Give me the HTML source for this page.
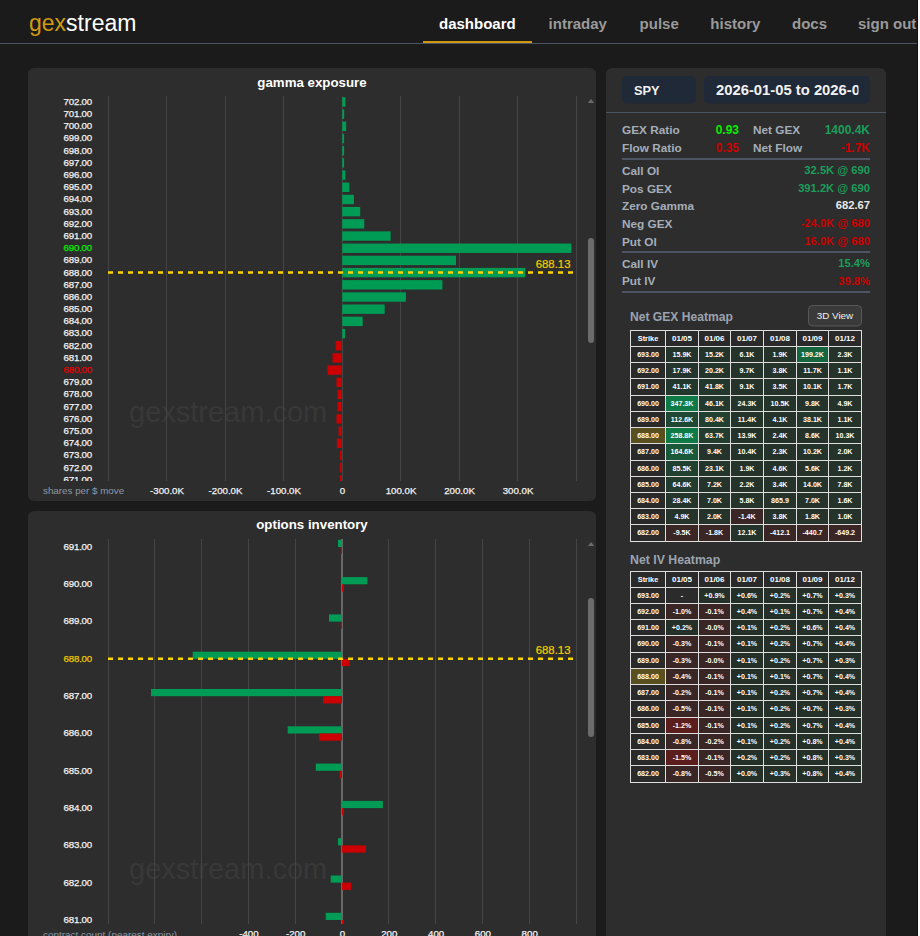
<!DOCTYPE html><html><head><meta charset="utf-8"><title>gexstream dashboard</title><style>
html,body{margin:0;padding:0;background:#1b1b1b;overflow:hidden;width:920px;height:936px}
svg text{font-family:"Liberation Sans", sans-serif}
</style></head><body>
<svg width="920" height="936" viewBox="0 0 920 936" style="display:block">
<rect x="0" y="0" width="920" height="936" fill="#1b1b1b"/>
<rect x="0" y="43" width="920" height="1" fill="#4b5563"/>
<text x="29" y="30.8" font-size="23" fill="#d09a12">gex<tspan fill="#ffffff">stream</tspan></text>
<text x="439" y="29" font-size="15" fill="#ffffff" font-weight="bold" text-anchor="start" >dashboard</text>
<text x="548.6" y="29" font-size="15" fill="#9a9a9a" font-weight="bold" text-anchor="start" >intraday</text>
<text x="639.6" y="29" font-size="15" fill="#9a9a9a" font-weight="bold" text-anchor="start" >pulse</text>
<text x="710.3" y="29" font-size="15" fill="#9a9a9a" font-weight="bold" text-anchor="start" >history</text>
<text x="792" y="29" font-size="15" fill="#9a9a9a" font-weight="bold" text-anchor="start" >docs</text>
<text x="858" y="29" font-size="15" fill="#9a9a9a" font-weight="bold" text-anchor="start" >sign out</text>
<rect x="423" y="41" width="109" height="2" fill="#cf960e"/>
<rect x="28" y="68" width="568" height="433" rx="6" fill="#2d2d2d"/>
<rect x="28" y="511" width="568" height="500" rx="6" fill="#2d2d2d"/>
<rect x="606" y="68" width="280" height="900" rx="6" fill="#2d2d2d"/>
<text x="312" y="86.7" font-size="13.3" fill="#ffffff" font-weight="bold" text-anchor="middle" >gamma exposure</text>
<text x="129" y="421.6" font-size="29" fill="#383838">gexstream.com</text>
<rect x="108" y="96" width="1" height="385" fill="#454545"/>
<rect x="166" y="96" width="1" height="385" fill="#454545"/>
<rect x="225" y="96" width="1" height="385" fill="#454545"/>
<rect x="283" y="96" width="1" height="385" fill="#454545"/>
<rect x="342" y="96" width="1" height="385" fill="#454545"/>
<rect x="400" y="96" width="1" height="385" fill="#454545"/>
<rect x="459" y="96" width="1" height="385" fill="#454545"/>
<rect x="517" y="96" width="1" height="385" fill="#454545"/>
<rect x="576" y="96" width="1" height="385" fill="#454545"/>
<defs><clipPath id="gc"><rect x="28" y="96" width="568" height="385"/></clipPath><clipPath id="oc"><rect x="28" y="539" width="568" height="385"/></clipPath></defs>
<g clip-path="url(#gc)">
<rect x="342.2" y="97.25" width="3.2" height="9.4" fill="#009b55"/>
<text x="92" y="104.85" font-size="9.7" fill="#f2f2f2" font-weight="normal" text-anchor="end" stroke="#f2f2f2" stroke-width="0.25" letter-spacing="-0.2">702.00</text>
<rect x="342.2" y="109.44" width="2" height="9.4" fill="#009b55"/>
<text x="92" y="117.04" font-size="9.7" fill="#f2f2f2" font-weight="normal" text-anchor="end" stroke="#f2f2f2" stroke-width="0.25" letter-spacing="-0.2">701.00</text>
<rect x="342.2" y="121.63" width="4" height="9.4" fill="#009b55"/>
<text x="92" y="129.23" font-size="9.7" fill="#f2f2f2" font-weight="normal" text-anchor="end" stroke="#f2f2f2" stroke-width="0.25" letter-spacing="-0.2">700.00</text>
<rect x="342.2" y="133.82" width="1.9" height="9.4" fill="#009b55"/>
<text x="92" y="141.42" font-size="9.7" fill="#f2f2f2" font-weight="normal" text-anchor="end" stroke="#f2f2f2" stroke-width="0.25" letter-spacing="-0.2">699.00</text>
<rect x="342.2" y="146.01" width="1.9" height="9.4" fill="#009b55"/>
<text x="92" y="153.61" font-size="9.7" fill="#f2f2f2" font-weight="normal" text-anchor="end" stroke="#f2f2f2" stroke-width="0.25" letter-spacing="-0.2">698.00</text>
<rect x="342.2" y="158.20" width="1.9" height="9.4" fill="#009b55"/>
<text x="92" y="165.80" font-size="9.7" fill="#f2f2f2" font-weight="normal" text-anchor="end" stroke="#f2f2f2" stroke-width="0.25" letter-spacing="-0.2">697.00</text>
<rect x="342.2" y="170.39" width="3.2" height="9.4" fill="#009b55"/>
<text x="92" y="177.99" font-size="9.7" fill="#f2f2f2" font-weight="normal" text-anchor="end" stroke="#f2f2f2" stroke-width="0.25" letter-spacing="-0.2">696.00</text>
<rect x="342.2" y="182.58" width="7.1" height="9.4" fill="#009b55"/>
<text x="92" y="190.18" font-size="9.7" fill="#f2f2f2" font-weight="normal" text-anchor="end" stroke="#f2f2f2" stroke-width="0.25" letter-spacing="-0.2">695.00</text>
<rect x="342.2" y="194.77" width="11.7" height="9.4" fill="#009b55"/>
<text x="92" y="202.37" font-size="9.7" fill="#f2f2f2" font-weight="normal" text-anchor="end" stroke="#f2f2f2" stroke-width="0.25" letter-spacing="-0.2">694.00</text>
<rect x="342.2" y="206.96" width="18" height="9.4" fill="#009b55"/>
<text x="92" y="214.56" font-size="9.7" fill="#f2f2f2" font-weight="normal" text-anchor="end" stroke="#f2f2f2" stroke-width="0.25" letter-spacing="-0.2">693.00</text>
<rect x="342.2" y="219.15" width="22.1" height="9.4" fill="#009b55"/>
<text x="92" y="226.75" font-size="9.7" fill="#f2f2f2" font-weight="normal" text-anchor="end" stroke="#f2f2f2" stroke-width="0.25" letter-spacing="-0.2">692.00</text>
<rect x="342.2" y="231.34" width="48.4" height="9.4" fill="#009b55"/>
<text x="92" y="238.94" font-size="9.7" fill="#f2f2f2" font-weight="normal" text-anchor="end" stroke="#f2f2f2" stroke-width="0.25" letter-spacing="-0.2">691.00</text>
<rect x="342.2" y="243.53" width="229.2" height="9.4" fill="#009b55"/>
<text x="92" y="251.13" font-size="9.7" fill="#00ee00" font-weight="normal" text-anchor="end" stroke="#00ee00" stroke-width="0.25" letter-spacing="-0.2">690.00</text>
<rect x="342.2" y="255.72" width="113.8" height="9.4" fill="#009b55"/>
<text x="92" y="263.32" font-size="9.7" fill="#f2f2f2" font-weight="normal" text-anchor="end" stroke="#f2f2f2" stroke-width="0.25" letter-spacing="-0.2">689.00</text>
<rect x="342.2" y="267.91" width="183.1" height="9.4" fill="#009b55"/>
<text x="92" y="275.51" font-size="9.7" fill="#f2f2f2" font-weight="normal" text-anchor="end" stroke="#f2f2f2" stroke-width="0.25" letter-spacing="-0.2">688.00</text>
<rect x="342.2" y="280.10" width="100.2" height="9.4" fill="#009b55"/>
<text x="92" y="287.70" font-size="9.7" fill="#f2f2f2" font-weight="normal" text-anchor="end" stroke="#f2f2f2" stroke-width="0.25" letter-spacing="-0.2">687.00</text>
<rect x="342.2" y="292.29" width="63.7" height="9.4" fill="#009b55"/>
<text x="92" y="299.89" font-size="9.7" fill="#f2f2f2" font-weight="normal" text-anchor="end" stroke="#f2f2f2" stroke-width="0.25" letter-spacing="-0.2">686.00</text>
<rect x="342.2" y="304.48" width="42.5" height="9.4" fill="#009b55"/>
<text x="92" y="312.08" font-size="9.7" fill="#f2f2f2" font-weight="normal" text-anchor="end" stroke="#f2f2f2" stroke-width="0.25" letter-spacing="-0.2">685.00</text>
<rect x="342.2" y="316.67" width="20.5" height="9.4" fill="#009b55"/>
<text x="92" y="324.27" font-size="9.7" fill="#f2f2f2" font-weight="normal" text-anchor="end" stroke="#f2f2f2" stroke-width="0.25" letter-spacing="-0.2">684.00</text>
<rect x="342.2" y="328.86" width="2.8" height="9.4" fill="#009b55"/>
<text x="92" y="336.46" font-size="9.7" fill="#f2f2f2" font-weight="normal" text-anchor="end" stroke="#f2f2f2" stroke-width="0.25" letter-spacing="-0.2">683.00</text>
<rect x="335.70" y="341.05" width="6.1" height="9.4" fill="#cc0000"/>
<text x="92" y="348.65" font-size="9.7" fill="#f2f2f2" font-weight="normal" text-anchor="end" stroke="#f2f2f2" stroke-width="0.25" letter-spacing="-0.2">682.00</text>
<rect x="332.50" y="353.24" width="9.3" height="9.4" fill="#cc0000"/>
<text x="92" y="360.84" font-size="9.7" fill="#f2f2f2" font-weight="normal" text-anchor="end" stroke="#f2f2f2" stroke-width="0.25" letter-spacing="-0.2">681.00</text>
<rect x="327.60" y="365.43" width="14.2" height="9.4" fill="#cc0000"/>
<text x="92" y="373.03" font-size="9.7" fill="#e60000" font-weight="normal" text-anchor="end" stroke="#e60000" stroke-width="0.25" letter-spacing="-0.2">680.00</text>
<rect x="336.50" y="377.62" width="5.3" height="9.4" fill="#cc0000"/>
<text x="92" y="385.22" font-size="9.7" fill="#f2f2f2" font-weight="normal" text-anchor="end" stroke="#f2f2f2" stroke-width="0.25" letter-spacing="-0.2">679.00</text>
<rect x="337.60" y="389.81" width="4.2" height="9.4" fill="#cc0000"/>
<text x="92" y="397.41" font-size="9.7" fill="#f2f2f2" font-weight="normal" text-anchor="end" stroke="#f2f2f2" stroke-width="0.25" letter-spacing="-0.2">678.00</text>
<rect x="337.60" y="402.00" width="4.2" height="9.4" fill="#cc0000"/>
<text x="92" y="409.60" font-size="9.7" fill="#f2f2f2" font-weight="normal" text-anchor="end" stroke="#f2f2f2" stroke-width="0.25" letter-spacing="-0.2">677.00</text>
<rect x="336.50" y="414.19" width="5.3" height="9.4" fill="#cc0000"/>
<text x="92" y="421.79" font-size="9.7" fill="#f2f2f2" font-weight="normal" text-anchor="end" stroke="#f2f2f2" stroke-width="0.25" letter-spacing="-0.2">676.00</text>
<rect x="338.60" y="426.38" width="3.2" height="9.4" fill="#cc0000"/>
<text x="92" y="433.98" font-size="9.7" fill="#f2f2f2" font-weight="normal" text-anchor="end" stroke="#f2f2f2" stroke-width="0.25" letter-spacing="-0.2">675.00</text>
<rect x="336.90" y="438.57" width="4.9" height="9.4" fill="#cc0000"/>
<text x="92" y="446.17" font-size="9.7" fill="#f2f2f2" font-weight="normal" text-anchor="end" stroke="#f2f2f2" stroke-width="0.25" letter-spacing="-0.2">674.00</text>
<rect x="339.80" y="450.76" width="2.0" height="9.4" fill="#cc0000"/>
<text x="92" y="458.36" font-size="9.7" fill="#f2f2f2" font-weight="normal" text-anchor="end" stroke="#f2f2f2" stroke-width="0.25" letter-spacing="-0.2">673.00</text>
<rect x="339.80" y="462.95" width="2.0" height="9.4" fill="#cc0000"/>
<text x="92" y="470.55" font-size="9.7" fill="#f2f2f2" font-weight="normal" text-anchor="end" stroke="#f2f2f2" stroke-width="0.25" letter-spacing="-0.2">672.00</text>
<rect x="339.80" y="475.14" width="2.0" height="9.4" fill="#cc0000"/>
<text x="92" y="482.74" font-size="9.7" fill="#f2f2f2" font-weight="normal" text-anchor="end" stroke="#f2f2f2" stroke-width="0.25" letter-spacing="-0.2">671.00</text>
</g>
<line x1="108" y1="272.5" x2="573" y2="272.5" stroke="#ffd400" stroke-width="2.4" stroke-dasharray="5 5"/>
<text x="570.5" y="267.7" font-size="11.4" fill="#f2cf00" font-weight="normal" text-anchor="end" stroke="#f2cf00" stroke-width="0.2">688.13</text>
<text x="43" y="494.3" font-size="9.8" fill="#8c98a8" font-weight="normal" text-anchor="start" >shares per $ move</text>
<text x="167.0" y="494.3" font-size="9.7" fill="#f2f2f2" font-weight="normal" text-anchor="middle" stroke="#f2f2f2" stroke-width="0.25">-300.0K</text>
<text x="225.5" y="494.3" font-size="9.7" fill="#f2f2f2" font-weight="normal" text-anchor="middle" stroke="#f2f2f2" stroke-width="0.25">-200.0K</text>
<text x="284.0" y="494.3" font-size="9.7" fill="#f2f2f2" font-weight="normal" text-anchor="middle" stroke="#f2f2f2" stroke-width="0.25">-100.0K</text>
<text x="342.5" y="494.3" font-size="9.7" fill="#f2f2f2" font-weight="normal" text-anchor="middle" stroke="#f2f2f2" stroke-width="0.25">0</text>
<text x="401.0" y="494.3" font-size="9.7" fill="#f2f2f2" font-weight="normal" text-anchor="middle" stroke="#f2f2f2" stroke-width="0.25">100.0K</text>
<text x="459.5" y="494.3" font-size="9.7" fill="#f2f2f2" font-weight="normal" text-anchor="middle" stroke="#f2f2f2" stroke-width="0.25">200.0K</text>
<text x="518.0" y="494.3" font-size="9.7" fill="#f2f2f2" font-weight="normal" text-anchor="middle" stroke="#f2f2f2" stroke-width="0.25">300.0K</text>
<path d="M587.8 103 L591 99 L594.2 103 Z" fill="#6a6a6a"/>
<rect x="588" y="238" width="6" height="105" rx="3" fill="#6b6b6b"/>
<text x="312" y="529.2" font-size="13.3" fill="#ffffff" font-weight="bold" text-anchor="middle" >options inventory</text>
<text x="129" y="878.5" font-size="29" fill="#383838">gexstream.com</text>
<rect x="108" y="539" width="1" height="385" fill="#454545"/>
<rect x="154" y="539" width="1" height="385" fill="#454545"/>
<rect x="201" y="539" width="1" height="385" fill="#454545"/>
<rect x="248" y="539" width="1" height="385" fill="#454545"/>
<rect x="295" y="539" width="1" height="385" fill="#454545"/>
<rect x="388" y="539" width="1" height="385" fill="#454545"/>
<rect x="435" y="539" width="1" height="385" fill="#454545"/>
<rect x="482" y="539" width="1" height="385" fill="#454545"/>
<rect x="529" y="539" width="1" height="385" fill="#454545"/>
<rect x="576" y="539" width="1" height="385" fill="#454545"/>
<rect x="341" y="539" width="2" height="385" fill="#686868"/>
<g clip-path="url(#oc)">
<rect x="338.00" y="539.80" width="4.00" height="7.2" fill="#009b55"/>
<rect x="340.80" y="547.00" width="1.20" height="7.2" fill="#cc0000"/>
<text x="92" y="549.80" font-size="9.7" fill="#f2f2f2" font-weight="normal" text-anchor="end" stroke="#f2f2f2" stroke-width="0.25" letter-spacing="-0.2">691.00</text>
<rect x="342.00" y="577.10" width="25.40" height="7.2" fill="#009b55"/>
<rect x="342.00" y="584.30" width="2.00" height="7.2" fill="#cc0000"/>
<text x="92" y="587.10" font-size="9.7" fill="#f2f2f2" font-weight="normal" text-anchor="end" stroke="#f2f2f2" stroke-width="0.25" letter-spacing="-0.2">690.00</text>
<rect x="329.00" y="614.40" width="13.00" height="7.2" fill="#009b55"/>
<rect x="340.80" y="621.60" width="1.20" height="7.2" fill="#cc0000"/>
<text x="92" y="624.40" font-size="9.7" fill="#f2f2f2" font-weight="normal" text-anchor="end" stroke="#f2f2f2" stroke-width="0.25" letter-spacing="-0.2">689.00</text>
<rect x="192.70" y="651.70" width="149.30" height="7.2" fill="#009b55"/>
<rect x="342.00" y="658.90" width="8.00" height="7.2" fill="#cc0000"/>
<text x="92" y="661.70" font-size="9.7" fill="#ecc800" font-weight="normal" text-anchor="end" stroke="#ecc800" stroke-width="0.25" letter-spacing="-0.2">688.00</text>
<rect x="151.00" y="689.00" width="191.00" height="7.2" fill="#009b55"/>
<rect x="323.00" y="696.20" width="19.00" height="7.2" fill="#cc0000"/>
<text x="92" y="699.00" font-size="9.7" fill="#f2f2f2" font-weight="normal" text-anchor="end" stroke="#f2f2f2" stroke-width="0.25" letter-spacing="-0.2">687.00</text>
<rect x="287.70" y="726.30" width="54.30" height="7.2" fill="#009b55"/>
<rect x="319.00" y="733.50" width="23.00" height="7.2" fill="#cc0000"/>
<text x="92" y="736.30" font-size="9.7" fill="#f2f2f2" font-weight="normal" text-anchor="end" stroke="#f2f2f2" stroke-width="0.25" letter-spacing="-0.2">686.00</text>
<rect x="315.80" y="763.60" width="26.20" height="7.2" fill="#009b55"/>
<rect x="339.60" y="770.80" width="2.40" height="7.2" fill="#cc0000"/>
<text x="92" y="773.60" font-size="9.7" fill="#f2f2f2" font-weight="normal" text-anchor="end" stroke="#f2f2f2" stroke-width="0.25" letter-spacing="-0.2">685.00</text>
<rect x="342.00" y="800.90" width="40.90" height="7.2" fill="#009b55"/>
<rect x="342.00" y="808.10" width="2.00" height="7.2" fill="#cc0000"/>
<text x="92" y="810.90" font-size="9.7" fill="#f2f2f2" font-weight="normal" text-anchor="end" stroke="#f2f2f2" stroke-width="0.25" letter-spacing="-0.2">684.00</text>
<rect x="338.00" y="838.20" width="4.00" height="7.2" fill="#009b55"/>
<rect x="342.00" y="845.40" width="24.00" height="7.2" fill="#cc0000"/>
<text x="92" y="848.20" font-size="9.7" fill="#f2f2f2" font-weight="normal" text-anchor="end" stroke="#f2f2f2" stroke-width="0.25" letter-spacing="-0.2">683.00</text>
<rect x="330.70" y="875.50" width="11.30" height="7.2" fill="#009b55"/>
<rect x="342.00" y="882.70" width="9.00" height="7.2" fill="#cc0000"/>
<text x="92" y="885.50" font-size="9.7" fill="#f2f2f2" font-weight="normal" text-anchor="end" stroke="#f2f2f2" stroke-width="0.25" letter-spacing="-0.2">682.00</text>
<rect x="325.70" y="912.80" width="16.30" height="7.2" fill="#009b55"/>
<rect x="342.00" y="920.00" width="2.00" height="7.2" fill="#cc0000"/>
<text x="92" y="922.80" font-size="9.7" fill="#f2f2f2" font-weight="normal" text-anchor="end" stroke="#f2f2f2" stroke-width="0.25" letter-spacing="-0.2">681.00</text>
</g>
<line x1="108" y1="658.7" x2="573" y2="658.7" stroke="#ffd400" stroke-width="2.4" stroke-dasharray="5 5"/>
<text x="570.5" y="654.1" font-size="11.4" fill="#f2cf00" font-weight="normal" text-anchor="end" stroke="#f2cf00" stroke-width="0.2">688.13</text>
<text x="43" y="938.0" font-size="9.93" fill="#8c98a8" font-weight="normal" text-anchor="start" >contract count (nearest expiry)</text>
<text x="248.9" y="937.0" font-size="9.7" fill="#f2f2f2" font-weight="normal" text-anchor="middle" stroke="#f2f2f2" stroke-width="0.25">-400</text>
<text x="295.7" y="937.0" font-size="9.7" fill="#f2f2f2" font-weight="normal" text-anchor="middle" stroke="#f2f2f2" stroke-width="0.25">-200</text>
<text x="342.5" y="937.0" font-size="9.7" fill="#f2f2f2" font-weight="normal" text-anchor="middle" stroke="#f2f2f2" stroke-width="0.25">0</text>
<text x="389.3" y="937.0" font-size="9.7" fill="#f2f2f2" font-weight="normal" text-anchor="middle" stroke="#f2f2f2" stroke-width="0.25">200</text>
<text x="436.1" y="937.0" font-size="9.7" fill="#f2f2f2" font-weight="normal" text-anchor="middle" stroke="#f2f2f2" stroke-width="0.25">400</text>
<text x="482.9" y="937.0" font-size="9.7" fill="#f2f2f2" font-weight="normal" text-anchor="middle" stroke="#f2f2f2" stroke-width="0.25">600</text>
<text x="529.7" y="937.0" font-size="9.7" fill="#f2f2f2" font-weight="normal" text-anchor="middle" stroke="#f2f2f2" stroke-width="0.25">800</text>
<path d="M587.8 546 L591 542 L594.2 546 Z" fill="#6a6a6a"/>
<rect x="588" y="598" width="6" height="139" rx="3" fill="#6b6b6b"/>
<rect x="622" y="76" width="74" height="27.5" rx="5" fill="#1f2937"/>
<rect x="704" y="76" width="166" height="27.5" rx="5" fill="#1f2937"/>
<text x="634" y="95" font-size="12.8" fill="#f2f2f2" font-weight="bold" text-anchor="start" >SPY</text>
<clipPath id="dc"><rect x="704" y="76" width="154.5" height="28"/></clipPath>
<g clip-path="url(#dc)"><text x="716" y="95" font-size="14.8" fill="#f2f2f2" font-weight="bold" text-anchor="start" >2026-01-05 to 2026-01-12</text></g>
<rect x="606" y="112" width="280" height="1" fill="#4b5563"/>
<text x="622" y="134" font-size="11.8" fill="#a5adb9" font-weight="bold" text-anchor="start" >GEX Ratio</text>
<text x="739" y="134" font-size="12" fill="#00ee00" font-weight="bold" text-anchor="end" >0.93</text>
<text x="753" y="134" font-size="11.8" fill="#a5adb9" font-weight="bold" text-anchor="start" >Net GEX</text>
<text x="870" y="134" font-size="12" fill="#1a9e5a" font-weight="bold" text-anchor="end" >1400.4K</text>
<text x="622" y="151.7" font-size="11.8" fill="#a5adb9" font-weight="bold" text-anchor="start" >Flow Ratio</text>
<text x="739" y="151.7" font-size="12" fill="#cc0000" font-weight="bold" text-anchor="end" >0.35</text>
<text x="753" y="151.7" font-size="11.8" fill="#a5adb9" font-weight="bold" text-anchor="start" >Net Flow</text>
<text x="870" y="151.7" font-size="12" fill="#cc0000" font-weight="bold" text-anchor="end" >-1.7K</text>
<rect x="622" y="158" width="248" height="2" fill="#4b5563"/>
<text x="622" y="174.8" font-size="11.8" fill="#a5adb9" font-weight="bold" text-anchor="start" >Call OI</text>
<text x="870" y="173.9" font-size="11.2" fill="#1a9e5a" font-weight="bold" text-anchor="end" >32.5K @ 690</text>
<text x="622" y="192.5" font-size="11.8" fill="#a5adb9" font-weight="bold" text-anchor="start" >Pos GEX</text>
<text x="870" y="191.6" font-size="11.2" fill="#1a9e5a" font-weight="bold" text-anchor="end" >391.2K @ 690</text>
<text x="622" y="210.2" font-size="11.8" fill="#a5adb9" font-weight="bold" text-anchor="start" >Zero Gamma</text>
<text x="870" y="209.29999999999998" font-size="11.2" fill="#e8e8e8" font-weight="bold" text-anchor="end" >682.67</text>
<text x="622" y="227.9" font-size="11.8" fill="#a5adb9" font-weight="bold" text-anchor="start" >Neg GEX</text>
<text x="870" y="227.0" font-size="11.2" fill="#cc0000" font-weight="bold" text-anchor="end" >-24.0K @ 680</text>
<text x="622" y="245.6" font-size="11.8" fill="#a5adb9" font-weight="bold" text-anchor="start" >Put OI</text>
<text x="870" y="244.7" font-size="11.2" fill="#cc0000" font-weight="bold" text-anchor="end" >16.0K @ 680</text>
<rect x="622" y="251" width="248" height="2" fill="#4b5563"/>
<text x="622" y="267.7" font-size="11.8" fill="#a5adb9" font-weight="bold" text-anchor="start" >Call IV</text>
<text x="870" y="266.9" font-size="11.2" fill="#1a9e5a" font-weight="bold" text-anchor="end" >15.4%</text>
<text x="622" y="285.3" font-size="11.8" fill="#a5adb9" font-weight="bold" text-anchor="start" >Put IV</text>
<text x="870" y="284.5" font-size="11.2" fill="#cc0000" font-weight="bold" text-anchor="end" >39.8%</text>
<rect x="622" y="291" width="248" height="2" fill="#4b5563"/>
<text x="630" y="320.6" font-size="12.1" fill="#9ca3af" font-weight="bold" text-anchor="start" >Net GEX Heatmap</text>
<rect x="808.5" y="305.5" width="53" height="20.5" rx="4" fill="#3a3a3a" stroke="#585858" stroke-width="1"/>
<text x="835" y="319.2" font-size="9.8" fill="#f2f2f2" font-weight="normal" text-anchor="middle" >3D View</text>
<text x="630" y="563.5" font-size="12.3" fill="#9ca3af" font-weight="bold" text-anchor="start" >Net IV Heatmap</text>
<rect x="630" y="330" width="232" height="212" fill="#2a2a2a"/>
<rect x="665" y="346" width="33" height="16" fill="#25342b"/>
<rect x="698" y="346" width="32" height="16" fill="#25342b"/>
<rect x="730" y="346" width="33" height="16" fill="#25332b"/>
<rect x="763" y="346" width="33" height="16" fill="#25332b"/>
<rect x="796" y="346" width="32" height="16" fill="#15653e"/>
<rect x="828" y="346" width="33" height="16" fill="#25332b"/>
<rect x="665" y="362" width="33" height="16" fill="#25342c"/>
<rect x="698" y="362" width="32" height="16" fill="#24352c"/>
<rect x="730" y="362" width="33" height="16" fill="#25342b"/>
<rect x="763" y="362" width="33" height="16" fill="#25332b"/>
<rect x="796" y="362" width="32" height="16" fill="#25342b"/>
<rect x="828" y="362" width="33" height="16" fill="#25332b"/>
<rect x="665" y="378" width="33" height="17" fill="#23382d"/>
<rect x="698" y="378" width="32" height="17" fill="#23382d"/>
<rect x="730" y="378" width="33" height="17" fill="#25332b"/>
<rect x="763" y="378" width="33" height="17" fill="#25332b"/>
<rect x="796" y="378" width="32" height="17" fill="#25342b"/>
<rect x="828" y="378" width="33" height="17" fill="#25332b"/>
<rect x="665" y="395" width="33" height="16" fill="#0e7a46"/>
<rect x="698" y="395" width="32" height="16" fill="#23392d"/>
<rect x="730" y="395" width="33" height="16" fill="#24352c"/>
<rect x="763" y="395" width="33" height="16" fill="#25342b"/>
<rect x="796" y="395" width="32" height="16" fill="#25342b"/>
<rect x="828" y="395" width="33" height="16" fill="#25332b"/>
<rect x="665" y="411" width="33" height="16" fill="#1e4833"/>
<rect x="698" y="411" width="32" height="16" fill="#214030"/>
<rect x="730" y="411" width="33" height="16" fill="#25342b"/>
<rect x="763" y="411" width="33" height="16" fill="#25332b"/>
<rect x="796" y="411" width="32" height="16" fill="#24372d"/>
<rect x="828" y="411" width="33" height="16" fill="#25332b"/>
<rect x="630" y="427" width="35" height="16" fill="#5a4f1e"/>
<rect x="665" y="427" width="33" height="16" fill="#0e7a46"/>
<rect x="698" y="427" width="32" height="16" fill="#223c2e"/>
<rect x="730" y="427" width="33" height="16" fill="#25342b"/>
<rect x="763" y="427" width="33" height="16" fill="#25332b"/>
<rect x="796" y="427" width="32" height="16" fill="#25332b"/>
<rect x="828" y="427" width="33" height="16" fill="#25342b"/>
<rect x="665" y="443" width="33" height="17" fill="#195939"/>
<rect x="698" y="443" width="32" height="17" fill="#25342b"/>
<rect x="730" y="443" width="33" height="17" fill="#25342b"/>
<rect x="763" y="443" width="33" height="17" fill="#25332b"/>
<rect x="796" y="443" width="32" height="17" fill="#25342b"/>
<rect x="828" y="443" width="33" height="17" fill="#25332b"/>
<rect x="665" y="460" width="33" height="16" fill="#204130"/>
<rect x="698" y="460" width="32" height="16" fill="#24352c"/>
<rect x="730" y="460" width="33" height="16" fill="#25332b"/>
<rect x="763" y="460" width="33" height="16" fill="#25332b"/>
<rect x="796" y="460" width="32" height="16" fill="#25332b"/>
<rect x="828" y="460" width="33" height="16" fill="#25332b"/>
<rect x="665" y="476" width="33" height="16" fill="#223c2f"/>
<rect x="698" y="476" width="32" height="16" fill="#25332b"/>
<rect x="730" y="476" width="33" height="16" fill="#25332b"/>
<rect x="763" y="476" width="33" height="16" fill="#25332b"/>
<rect x="796" y="476" width="32" height="16" fill="#25342b"/>
<rect x="828" y="476" width="33" height="16" fill="#25332b"/>
<rect x="665" y="492" width="33" height="16" fill="#24362c"/>
<rect x="698" y="492" width="32" height="16" fill="#25332b"/>
<rect x="730" y="492" width="33" height="16" fill="#25332b"/>
<rect x="763" y="492" width="33" height="16" fill="#25332b"/>
<rect x="796" y="492" width="32" height="16" fill="#25332b"/>
<rect x="828" y="492" width="33" height="16" fill="#25332b"/>
<rect x="665" y="508" width="33" height="16" fill="#25332b"/>
<rect x="698" y="508" width="32" height="16" fill="#25332b"/>
<rect x="730" y="508" width="33" height="16" fill="#3b2626"/>
<rect x="763" y="508" width="33" height="16" fill="#25332b"/>
<rect x="796" y="508" width="32" height="16" fill="#25332b"/>
<rect x="828" y="508" width="33" height="16" fill="#25332b"/>
<rect x="665" y="524" width="33" height="17" fill="#3b2626"/>
<rect x="698" y="524" width="32" height="17" fill="#3b2626"/>
<rect x="730" y="524" width="33" height="17" fill="#25342b"/>
<rect x="763" y="524" width="33" height="17" fill="#3b2626"/>
<rect x="796" y="524" width="32" height="17" fill="#3b2626"/>
<rect x="828" y="524" width="33" height="17" fill="#3b2626"/>
<rect x="630" y="330" width="1" height="212" fill="#dedede"/>
<rect x="665" y="330" width="1" height="212" fill="#dedede"/>
<rect x="698" y="330" width="1" height="212" fill="#dedede"/>
<rect x="730" y="330" width="1" height="212" fill="#dedede"/>
<rect x="763" y="330" width="1" height="212" fill="#dedede"/>
<rect x="796" y="330" width="1" height="212" fill="#dedede"/>
<rect x="828" y="330" width="1" height="212" fill="#dedede"/>
<rect x="861" y="330" width="1" height="212" fill="#dedede"/>
<rect x="630" y="330" width="232" height="1" fill="#dedede"/>
<rect x="630" y="346" width="232" height="1" fill="#dedede"/>
<rect x="630" y="362" width="232" height="1" fill="#dedede"/>
<rect x="630" y="378" width="232" height="1" fill="#dedede"/>
<rect x="630" y="395" width="232" height="1" fill="#dedede"/>
<rect x="630" y="411" width="232" height="1" fill="#dedede"/>
<rect x="630" y="427" width="232" height="1" fill="#dedede"/>
<rect x="630" y="443" width="232" height="1" fill="#dedede"/>
<rect x="630" y="460" width="232" height="1" fill="#dedede"/>
<rect x="630" y="476" width="232" height="1" fill="#dedede"/>
<rect x="630" y="492" width="232" height="1" fill="#dedede"/>
<rect x="630" y="508" width="232" height="1" fill="#dedede"/>
<rect x="630" y="524" width="232" height="1" fill="#dedede"/>
<rect x="630" y="541" width="232" height="1" fill="#dedede"/>
<text x="648.00" y="340.8" font-size="7.4" fill="#ffffff" font-weight="bold" text-anchor="middle" >Strike</text>
<text x="682.00" y="340.8" font-size="8" fill="#ffffff" font-weight="bold" text-anchor="middle" >01/05</text>
<text x="714.50" y="340.8" font-size="8" fill="#ffffff" font-weight="bold" text-anchor="middle" >01/06</text>
<text x="747.00" y="340.8" font-size="8" fill="#ffffff" font-weight="bold" text-anchor="middle" >01/07</text>
<text x="780.00" y="340.8" font-size="8" fill="#ffffff" font-weight="bold" text-anchor="middle" >01/08</text>
<text x="812.50" y="340.8" font-size="8" fill="#ffffff" font-weight="bold" text-anchor="middle" >01/09</text>
<text x="845.00" y="340.8" font-size="8" fill="#ffffff" font-weight="bold" text-anchor="middle" >01/12</text>
<text x="648.00" y="357.00" font-size="7.1" fill="#ffffff" font-weight="bold" text-anchor="middle" >693.00</text>
<text x="682.00" y="357.00" font-size="7.1" fill="#ffffff" font-weight="bold" text-anchor="middle" >15.9K</text>
<text x="714.50" y="357.00" font-size="7.1" fill="#ffffff" font-weight="bold" text-anchor="middle" >15.2K</text>
<text x="747.00" y="357.00" font-size="7.1" fill="#ffffff" font-weight="bold" text-anchor="middle" >6.1K</text>
<text x="780.00" y="357.00" font-size="7.1" fill="#ffffff" font-weight="bold" text-anchor="middle" >1.9K</text>
<text x="812.50" y="357.00" font-size="7.1" fill="#ffffff" font-weight="bold" text-anchor="middle" >199.2K</text>
<text x="845.00" y="357.00" font-size="7.1" fill="#ffffff" font-weight="bold" text-anchor="middle" >2.3K</text>
<text x="648.00" y="373.00" font-size="7.1" fill="#ffffff" font-weight="bold" text-anchor="middle" >692.00</text>
<text x="682.00" y="373.00" font-size="7.1" fill="#ffffff" font-weight="bold" text-anchor="middle" >17.9K</text>
<text x="714.50" y="373.00" font-size="7.1" fill="#ffffff" font-weight="bold" text-anchor="middle" >20.2K</text>
<text x="747.00" y="373.00" font-size="7.1" fill="#ffffff" font-weight="bold" text-anchor="middle" >9.7K</text>
<text x="780.00" y="373.00" font-size="7.1" fill="#ffffff" font-weight="bold" text-anchor="middle" >3.8K</text>
<text x="812.50" y="373.00" font-size="7.1" fill="#ffffff" font-weight="bold" text-anchor="middle" >11.7K</text>
<text x="845.00" y="373.00" font-size="7.1" fill="#ffffff" font-weight="bold" text-anchor="middle" >1.1K</text>
<text x="648.00" y="389.00" font-size="7.1" fill="#ffffff" font-weight="bold" text-anchor="middle" >691.00</text>
<text x="682.00" y="389.00" font-size="7.1" fill="#ffffff" font-weight="bold" text-anchor="middle" >41.1K</text>
<text x="714.50" y="389.00" font-size="7.1" fill="#ffffff" font-weight="bold" text-anchor="middle" >41.8K</text>
<text x="747.00" y="389.00" font-size="7.1" fill="#ffffff" font-weight="bold" text-anchor="middle" >9.1K</text>
<text x="780.00" y="389.00" font-size="7.1" fill="#ffffff" font-weight="bold" text-anchor="middle" >3.5K</text>
<text x="812.50" y="389.00" font-size="7.1" fill="#ffffff" font-weight="bold" text-anchor="middle" >10.1K</text>
<text x="845.00" y="389.00" font-size="7.1" fill="#ffffff" font-weight="bold" text-anchor="middle" >1.7K</text>
<text x="648.00" y="406.00" font-size="7.1" fill="#ffffff" font-weight="bold" text-anchor="middle" >690.00</text>
<text x="682.00" y="406.00" font-size="7.1" fill="#ffffff" font-weight="bold" text-anchor="middle" >347.3K</text>
<text x="714.50" y="406.00" font-size="7.1" fill="#ffffff" font-weight="bold" text-anchor="middle" >46.1K</text>
<text x="747.00" y="406.00" font-size="7.1" fill="#ffffff" font-weight="bold" text-anchor="middle" >24.3K</text>
<text x="780.00" y="406.00" font-size="7.1" fill="#ffffff" font-weight="bold" text-anchor="middle" >10.5K</text>
<text x="812.50" y="406.00" font-size="7.1" fill="#ffffff" font-weight="bold" text-anchor="middle" >9.8K</text>
<text x="845.00" y="406.00" font-size="7.1" fill="#ffffff" font-weight="bold" text-anchor="middle" >4.9K</text>
<text x="648.00" y="422.00" font-size="7.1" fill="#ffffff" font-weight="bold" text-anchor="middle" >689.00</text>
<text x="682.00" y="422.00" font-size="7.1" fill="#ffffff" font-weight="bold" text-anchor="middle" >112.6K</text>
<text x="714.50" y="422.00" font-size="7.1" fill="#ffffff" font-weight="bold" text-anchor="middle" >80.4K</text>
<text x="747.00" y="422.00" font-size="7.1" fill="#ffffff" font-weight="bold" text-anchor="middle" >11.4K</text>
<text x="780.00" y="422.00" font-size="7.1" fill="#ffffff" font-weight="bold" text-anchor="middle" >4.1K</text>
<text x="812.50" y="422.00" font-size="7.1" fill="#ffffff" font-weight="bold" text-anchor="middle" >38.1K</text>
<text x="845.00" y="422.00" font-size="7.1" fill="#ffffff" font-weight="bold" text-anchor="middle" >1.1K</text>
<text x="648.00" y="438.00" font-size="7.1" fill="#ffffff" font-weight="bold" text-anchor="middle" >688.00</text>
<text x="682.00" y="438.00" font-size="7.1" fill="#ffffff" font-weight="bold" text-anchor="middle" >258.8K</text>
<text x="714.50" y="438.00" font-size="7.1" fill="#ffffff" font-weight="bold" text-anchor="middle" >63.7K</text>
<text x="747.00" y="438.00" font-size="7.1" fill="#ffffff" font-weight="bold" text-anchor="middle" >13.9K</text>
<text x="780.00" y="438.00" font-size="7.1" fill="#ffffff" font-weight="bold" text-anchor="middle" >2.4K</text>
<text x="812.50" y="438.00" font-size="7.1" fill="#ffffff" font-weight="bold" text-anchor="middle" >8.6K</text>
<text x="845.00" y="438.00" font-size="7.1" fill="#ffffff" font-weight="bold" text-anchor="middle" >10.3K</text>
<text x="648.00" y="454.00" font-size="7.1" fill="#ffffff" font-weight="bold" text-anchor="middle" >687.00</text>
<text x="682.00" y="454.00" font-size="7.1" fill="#ffffff" font-weight="bold" text-anchor="middle" >164.6K</text>
<text x="714.50" y="454.00" font-size="7.1" fill="#ffffff" font-weight="bold" text-anchor="middle" >9.4K</text>
<text x="747.00" y="454.00" font-size="7.1" fill="#ffffff" font-weight="bold" text-anchor="middle" >10.4K</text>
<text x="780.00" y="454.00" font-size="7.1" fill="#ffffff" font-weight="bold" text-anchor="middle" >2.3K</text>
<text x="812.50" y="454.00" font-size="7.1" fill="#ffffff" font-weight="bold" text-anchor="middle" >10.2K</text>
<text x="845.00" y="454.00" font-size="7.1" fill="#ffffff" font-weight="bold" text-anchor="middle" >2.0K</text>
<text x="648.00" y="471.00" font-size="7.1" fill="#ffffff" font-weight="bold" text-anchor="middle" >686.00</text>
<text x="682.00" y="471.00" font-size="7.1" fill="#ffffff" font-weight="bold" text-anchor="middle" >85.5K</text>
<text x="714.50" y="471.00" font-size="7.1" fill="#ffffff" font-weight="bold" text-anchor="middle" >23.1K</text>
<text x="747.00" y="471.00" font-size="7.1" fill="#ffffff" font-weight="bold" text-anchor="middle" >1.9K</text>
<text x="780.00" y="471.00" font-size="7.1" fill="#ffffff" font-weight="bold" text-anchor="middle" >4.6K</text>
<text x="812.50" y="471.00" font-size="7.1" fill="#ffffff" font-weight="bold" text-anchor="middle" >5.6K</text>
<text x="845.00" y="471.00" font-size="7.1" fill="#ffffff" font-weight="bold" text-anchor="middle" >1.2K</text>
<text x="648.00" y="487.00" font-size="7.1" fill="#ffffff" font-weight="bold" text-anchor="middle" >685.00</text>
<text x="682.00" y="487.00" font-size="7.1" fill="#ffffff" font-weight="bold" text-anchor="middle" >64.6K</text>
<text x="714.50" y="487.00" font-size="7.1" fill="#ffffff" font-weight="bold" text-anchor="middle" >7.2K</text>
<text x="747.00" y="487.00" font-size="7.1" fill="#ffffff" font-weight="bold" text-anchor="middle" >2.2K</text>
<text x="780.00" y="487.00" font-size="7.1" fill="#ffffff" font-weight="bold" text-anchor="middle" >3.4K</text>
<text x="812.50" y="487.00" font-size="7.1" fill="#ffffff" font-weight="bold" text-anchor="middle" >14.0K</text>
<text x="845.00" y="487.00" font-size="7.1" fill="#ffffff" font-weight="bold" text-anchor="middle" >7.8K</text>
<text x="648.00" y="503.00" font-size="7.1" fill="#ffffff" font-weight="bold" text-anchor="middle" >684.00</text>
<text x="682.00" y="503.00" font-size="7.1" fill="#ffffff" font-weight="bold" text-anchor="middle" >28.4K</text>
<text x="714.50" y="503.00" font-size="7.1" fill="#ffffff" font-weight="bold" text-anchor="middle" >7.0K</text>
<text x="747.00" y="503.00" font-size="7.1" fill="#ffffff" font-weight="bold" text-anchor="middle" >5.8K</text>
<text x="780.00" y="503.00" font-size="7.1" fill="#ffffff" font-weight="bold" text-anchor="middle" >865.9</text>
<text x="812.50" y="503.00" font-size="7.1" fill="#ffffff" font-weight="bold" text-anchor="middle" >7.0K</text>
<text x="845.00" y="503.00" font-size="7.1" fill="#ffffff" font-weight="bold" text-anchor="middle" >1.6K</text>
<text x="648.00" y="519.00" font-size="7.1" fill="#ffffff" font-weight="bold" text-anchor="middle" >683.00</text>
<text x="682.00" y="519.00" font-size="7.1" fill="#ffffff" font-weight="bold" text-anchor="middle" >4.9K</text>
<text x="714.50" y="519.00" font-size="7.1" fill="#ffffff" font-weight="bold" text-anchor="middle" >2.0K</text>
<text x="747.00" y="519.00" font-size="7.1" fill="#ffffff" font-weight="bold" text-anchor="middle" >-1.4K</text>
<text x="780.00" y="519.00" font-size="7.1" fill="#ffffff" font-weight="bold" text-anchor="middle" >3.8K</text>
<text x="812.50" y="519.00" font-size="7.1" fill="#ffffff" font-weight="bold" text-anchor="middle" >1.8K</text>
<text x="845.00" y="519.00" font-size="7.1" fill="#ffffff" font-weight="bold" text-anchor="middle" >1.0K</text>
<text x="648.00" y="535.00" font-size="7.1" fill="#ffffff" font-weight="bold" text-anchor="middle" >682.00</text>
<text x="682.00" y="535.00" font-size="7.1" fill="#ffffff" font-weight="bold" text-anchor="middle" >-9.5K</text>
<text x="714.50" y="535.00" font-size="7.1" fill="#ffffff" font-weight="bold" text-anchor="middle" >-1.8K</text>
<text x="747.00" y="535.00" font-size="7.1" fill="#ffffff" font-weight="bold" text-anchor="middle" >12.1K</text>
<text x="780.00" y="535.00" font-size="7.1" fill="#ffffff" font-weight="bold" text-anchor="middle" >-412.1</text>
<text x="812.50" y="535.00" font-size="7.1" fill="#ffffff" font-weight="bold" text-anchor="middle" >-440.7</text>
<text x="845.00" y="535.00" font-size="7.1" fill="#ffffff" font-weight="bold" text-anchor="middle" >-649.2</text>
<rect x="630" y="571" width="232" height="212" fill="#2a2a2a"/>
<rect x="665" y="587" width="33" height="16" fill="#2b2b2b"/>
<rect x="698" y="587" width="32" height="16" fill="#253029"/>
<rect x="730" y="587" width="33" height="16" fill="#253029"/>
<rect x="763" y="587" width="33" height="16" fill="#253029"/>
<rect x="796" y="587" width="32" height="16" fill="#253029"/>
<rect x="828" y="587" width="33" height="16" fill="#253029"/>
<rect x="665" y="603" width="33" height="16" fill="#3b2626"/>
<rect x="698" y="603" width="32" height="16" fill="#3b2626"/>
<rect x="730" y="603" width="33" height="16" fill="#253029"/>
<rect x="763" y="603" width="33" height="16" fill="#253029"/>
<rect x="796" y="603" width="32" height="16" fill="#253029"/>
<rect x="828" y="603" width="33" height="16" fill="#253029"/>
<rect x="665" y="619" width="33" height="16" fill="#253029"/>
<rect x="698" y="619" width="32" height="16" fill="#3b2626"/>
<rect x="730" y="619" width="33" height="16" fill="#253029"/>
<rect x="763" y="619" width="33" height="16" fill="#253029"/>
<rect x="796" y="619" width="32" height="16" fill="#253029"/>
<rect x="828" y="619" width="33" height="16" fill="#253029"/>
<rect x="665" y="635" width="33" height="17" fill="#3b2626"/>
<rect x="698" y="635" width="32" height="17" fill="#3b2626"/>
<rect x="730" y="635" width="33" height="17" fill="#253029"/>
<rect x="763" y="635" width="33" height="17" fill="#253029"/>
<rect x="796" y="635" width="32" height="17" fill="#253029"/>
<rect x="828" y="635" width="33" height="17" fill="#253029"/>
<rect x="665" y="652" width="33" height="16" fill="#3b2626"/>
<rect x="698" y="652" width="32" height="16" fill="#3b2626"/>
<rect x="730" y="652" width="33" height="16" fill="#253029"/>
<rect x="763" y="652" width="33" height="16" fill="#253029"/>
<rect x="796" y="652" width="32" height="16" fill="#253029"/>
<rect x="828" y="652" width="33" height="16" fill="#253029"/>
<rect x="630" y="668" width="35" height="16" fill="#5a4f1e"/>
<rect x="665" y="668" width="33" height="16" fill="#3b2626"/>
<rect x="698" y="668" width="32" height="16" fill="#3b2626"/>
<rect x="730" y="668" width="33" height="16" fill="#253029"/>
<rect x="763" y="668" width="33" height="16" fill="#253029"/>
<rect x="796" y="668" width="32" height="16" fill="#253029"/>
<rect x="828" y="668" width="33" height="16" fill="#253029"/>
<rect x="665" y="684" width="33" height="16" fill="#3b2626"/>
<rect x="698" y="684" width="32" height="16" fill="#3b2626"/>
<rect x="730" y="684" width="33" height="16" fill="#253029"/>
<rect x="763" y="684" width="33" height="16" fill="#253029"/>
<rect x="796" y="684" width="32" height="16" fill="#253029"/>
<rect x="828" y="684" width="33" height="16" fill="#253029"/>
<rect x="665" y="700" width="33" height="17" fill="#3b2626"/>
<rect x="698" y="700" width="32" height="17" fill="#3b2626"/>
<rect x="730" y="700" width="33" height="17" fill="#253029"/>
<rect x="763" y="700" width="33" height="17" fill="#253029"/>
<rect x="796" y="700" width="32" height="17" fill="#253029"/>
<rect x="828" y="700" width="33" height="17" fill="#253029"/>
<rect x="665" y="717" width="33" height="16" fill="#5c1d1d"/>
<rect x="698" y="717" width="32" height="16" fill="#3b2626"/>
<rect x="730" y="717" width="33" height="16" fill="#253029"/>
<rect x="763" y="717" width="33" height="16" fill="#253029"/>
<rect x="796" y="717" width="32" height="16" fill="#253029"/>
<rect x="828" y="717" width="33" height="16" fill="#253029"/>
<rect x="665" y="733" width="33" height="16" fill="#3b2626"/>
<rect x="698" y="733" width="32" height="16" fill="#3b2626"/>
<rect x="730" y="733" width="33" height="16" fill="#253029"/>
<rect x="763" y="733" width="33" height="16" fill="#253029"/>
<rect x="796" y="733" width="32" height="16" fill="#253029"/>
<rect x="828" y="733" width="33" height="16" fill="#253029"/>
<rect x="665" y="749" width="33" height="16" fill="#5c1d1d"/>
<rect x="698" y="749" width="32" height="16" fill="#3b2626"/>
<rect x="730" y="749" width="33" height="16" fill="#253029"/>
<rect x="763" y="749" width="33" height="16" fill="#253029"/>
<rect x="796" y="749" width="32" height="16" fill="#253029"/>
<rect x="828" y="749" width="33" height="16" fill="#253029"/>
<rect x="665" y="765" width="33" height="17" fill="#3b2626"/>
<rect x="698" y="765" width="32" height="17" fill="#3b2626"/>
<rect x="730" y="765" width="33" height="17" fill="#253029"/>
<rect x="763" y="765" width="33" height="17" fill="#253029"/>
<rect x="796" y="765" width="32" height="17" fill="#253029"/>
<rect x="828" y="765" width="33" height="17" fill="#253029"/>
<rect x="630" y="571" width="1" height="212" fill="#dedede"/>
<rect x="665" y="571" width="1" height="212" fill="#dedede"/>
<rect x="698" y="571" width="1" height="212" fill="#dedede"/>
<rect x="730" y="571" width="1" height="212" fill="#dedede"/>
<rect x="763" y="571" width="1" height="212" fill="#dedede"/>
<rect x="796" y="571" width="1" height="212" fill="#dedede"/>
<rect x="828" y="571" width="1" height="212" fill="#dedede"/>
<rect x="861" y="571" width="1" height="212" fill="#dedede"/>
<rect x="630" y="571" width="232" height="1" fill="#dedede"/>
<rect x="630" y="587" width="232" height="1" fill="#dedede"/>
<rect x="630" y="603" width="232" height="1" fill="#dedede"/>
<rect x="630" y="619" width="232" height="1" fill="#dedede"/>
<rect x="630" y="635" width="232" height="1" fill="#dedede"/>
<rect x="630" y="652" width="232" height="1" fill="#dedede"/>
<rect x="630" y="668" width="232" height="1" fill="#dedede"/>
<rect x="630" y="684" width="232" height="1" fill="#dedede"/>
<rect x="630" y="700" width="232" height="1" fill="#dedede"/>
<rect x="630" y="717" width="232" height="1" fill="#dedede"/>
<rect x="630" y="733" width="232" height="1" fill="#dedede"/>
<rect x="630" y="749" width="232" height="1" fill="#dedede"/>
<rect x="630" y="765" width="232" height="1" fill="#dedede"/>
<rect x="630" y="782" width="232" height="1" fill="#dedede"/>
<text x="648.00" y="581.8" font-size="7.4" fill="#ffffff" font-weight="bold" text-anchor="middle" >Strike</text>
<text x="682.00" y="581.8" font-size="8" fill="#ffffff" font-weight="bold" text-anchor="middle" >01/05</text>
<text x="714.50" y="581.8" font-size="8" fill="#ffffff" font-weight="bold" text-anchor="middle" >01/06</text>
<text x="747.00" y="581.8" font-size="8" fill="#ffffff" font-weight="bold" text-anchor="middle" >01/07</text>
<text x="780.00" y="581.8" font-size="8" fill="#ffffff" font-weight="bold" text-anchor="middle" >01/08</text>
<text x="812.50" y="581.8" font-size="8" fill="#ffffff" font-weight="bold" text-anchor="middle" >01/09</text>
<text x="845.00" y="581.8" font-size="8" fill="#ffffff" font-weight="bold" text-anchor="middle" >01/12</text>
<text x="648.00" y="598.00" font-size="7.1" fill="#ffffff" font-weight="bold" text-anchor="middle" >693.00</text>
<text x="682.00" y="598.00" font-size="7.1" fill="#ffffff" font-weight="bold" text-anchor="middle" >-</text>
<text x="714.50" y="598.00" font-size="7.1" fill="#ffffff" font-weight="bold" text-anchor="middle" >+0.9%</text>
<text x="747.00" y="598.00" font-size="7.1" fill="#ffffff" font-weight="bold" text-anchor="middle" >+0.6%</text>
<text x="780.00" y="598.00" font-size="7.1" fill="#ffffff" font-weight="bold" text-anchor="middle" >+0.2%</text>
<text x="812.50" y="598.00" font-size="7.1" fill="#ffffff" font-weight="bold" text-anchor="middle" >+0.7%</text>
<text x="845.00" y="598.00" font-size="7.1" fill="#ffffff" font-weight="bold" text-anchor="middle" >+0.3%</text>
<text x="648.00" y="614.00" font-size="7.1" fill="#ffffff" font-weight="bold" text-anchor="middle" >692.00</text>
<text x="682.00" y="614.00" font-size="7.1" fill="#ffffff" font-weight="bold" text-anchor="middle" >-1.0%</text>
<text x="714.50" y="614.00" font-size="7.1" fill="#ffffff" font-weight="bold" text-anchor="middle" >-0.1%</text>
<text x="747.00" y="614.00" font-size="7.1" fill="#ffffff" font-weight="bold" text-anchor="middle" >+0.4%</text>
<text x="780.00" y="614.00" font-size="7.1" fill="#ffffff" font-weight="bold" text-anchor="middle" >+0.1%</text>
<text x="812.50" y="614.00" font-size="7.1" fill="#ffffff" font-weight="bold" text-anchor="middle" >+0.7%</text>
<text x="845.00" y="614.00" font-size="7.1" fill="#ffffff" font-weight="bold" text-anchor="middle" >+0.4%</text>
<text x="648.00" y="630.00" font-size="7.1" fill="#ffffff" font-weight="bold" text-anchor="middle" >691.00</text>
<text x="682.00" y="630.00" font-size="7.1" fill="#ffffff" font-weight="bold" text-anchor="middle" >+0.2%</text>
<text x="714.50" y="630.00" font-size="7.1" fill="#ffffff" font-weight="bold" text-anchor="middle" >-0.0%</text>
<text x="747.00" y="630.00" font-size="7.1" fill="#ffffff" font-weight="bold" text-anchor="middle" >+0.1%</text>
<text x="780.00" y="630.00" font-size="7.1" fill="#ffffff" font-weight="bold" text-anchor="middle" >+0.2%</text>
<text x="812.50" y="630.00" font-size="7.1" fill="#ffffff" font-weight="bold" text-anchor="middle" >+0.6%</text>
<text x="845.00" y="630.00" font-size="7.1" fill="#ffffff" font-weight="bold" text-anchor="middle" >+0.4%</text>
<text x="648.00" y="646.00" font-size="7.1" fill="#ffffff" font-weight="bold" text-anchor="middle" >690.00</text>
<text x="682.00" y="646.00" font-size="7.1" fill="#ffffff" font-weight="bold" text-anchor="middle" >-0.3%</text>
<text x="714.50" y="646.00" font-size="7.1" fill="#ffffff" font-weight="bold" text-anchor="middle" >-0.1%</text>
<text x="747.00" y="646.00" font-size="7.1" fill="#ffffff" font-weight="bold" text-anchor="middle" >+0.1%</text>
<text x="780.00" y="646.00" font-size="7.1" fill="#ffffff" font-weight="bold" text-anchor="middle" >+0.2%</text>
<text x="812.50" y="646.00" font-size="7.1" fill="#ffffff" font-weight="bold" text-anchor="middle" >+0.7%</text>
<text x="845.00" y="646.00" font-size="7.1" fill="#ffffff" font-weight="bold" text-anchor="middle" >+0.4%</text>
<text x="648.00" y="663.00" font-size="7.1" fill="#ffffff" font-weight="bold" text-anchor="middle" >689.00</text>
<text x="682.00" y="663.00" font-size="7.1" fill="#ffffff" font-weight="bold" text-anchor="middle" >-0.3%</text>
<text x="714.50" y="663.00" font-size="7.1" fill="#ffffff" font-weight="bold" text-anchor="middle" >-0.0%</text>
<text x="747.00" y="663.00" font-size="7.1" fill="#ffffff" font-weight="bold" text-anchor="middle" >+0.1%</text>
<text x="780.00" y="663.00" font-size="7.1" fill="#ffffff" font-weight="bold" text-anchor="middle" >+0.2%</text>
<text x="812.50" y="663.00" font-size="7.1" fill="#ffffff" font-weight="bold" text-anchor="middle" >+0.7%</text>
<text x="845.00" y="663.00" font-size="7.1" fill="#ffffff" font-weight="bold" text-anchor="middle" >+0.3%</text>
<text x="648.00" y="679.00" font-size="7.1" fill="#ffffff" font-weight="bold" text-anchor="middle" >688.00</text>
<text x="682.00" y="679.00" font-size="7.1" fill="#ffffff" font-weight="bold" text-anchor="middle" >-0.4%</text>
<text x="714.50" y="679.00" font-size="7.1" fill="#ffffff" font-weight="bold" text-anchor="middle" >-0.1%</text>
<text x="747.00" y="679.00" font-size="7.1" fill="#ffffff" font-weight="bold" text-anchor="middle" >+0.1%</text>
<text x="780.00" y="679.00" font-size="7.1" fill="#ffffff" font-weight="bold" text-anchor="middle" >+0.1%</text>
<text x="812.50" y="679.00" font-size="7.1" fill="#ffffff" font-weight="bold" text-anchor="middle" >+0.7%</text>
<text x="845.00" y="679.00" font-size="7.1" fill="#ffffff" font-weight="bold" text-anchor="middle" >+0.4%</text>
<text x="648.00" y="695.00" font-size="7.1" fill="#ffffff" font-weight="bold" text-anchor="middle" >687.00</text>
<text x="682.00" y="695.00" font-size="7.1" fill="#ffffff" font-weight="bold" text-anchor="middle" >-0.2%</text>
<text x="714.50" y="695.00" font-size="7.1" fill="#ffffff" font-weight="bold" text-anchor="middle" >-0.1%</text>
<text x="747.00" y="695.00" font-size="7.1" fill="#ffffff" font-weight="bold" text-anchor="middle" >+0.1%</text>
<text x="780.00" y="695.00" font-size="7.1" fill="#ffffff" font-weight="bold" text-anchor="middle" >+0.2%</text>
<text x="812.50" y="695.00" font-size="7.1" fill="#ffffff" font-weight="bold" text-anchor="middle" >+0.7%</text>
<text x="845.00" y="695.00" font-size="7.1" fill="#ffffff" font-weight="bold" text-anchor="middle" >+0.4%</text>
<text x="648.00" y="711.00" font-size="7.1" fill="#ffffff" font-weight="bold" text-anchor="middle" >686.00</text>
<text x="682.00" y="711.00" font-size="7.1" fill="#ffffff" font-weight="bold" text-anchor="middle" >-0.5%</text>
<text x="714.50" y="711.00" font-size="7.1" fill="#ffffff" font-weight="bold" text-anchor="middle" >-0.1%</text>
<text x="747.00" y="711.00" font-size="7.1" fill="#ffffff" font-weight="bold" text-anchor="middle" >+0.1%</text>
<text x="780.00" y="711.00" font-size="7.1" fill="#ffffff" font-weight="bold" text-anchor="middle" >+0.2%</text>
<text x="812.50" y="711.00" font-size="7.1" fill="#ffffff" font-weight="bold" text-anchor="middle" >+0.7%</text>
<text x="845.00" y="711.00" font-size="7.1" fill="#ffffff" font-weight="bold" text-anchor="middle" >+0.3%</text>
<text x="648.00" y="728.00" font-size="7.1" fill="#ffffff" font-weight="bold" text-anchor="middle" >685.00</text>
<text x="682.00" y="728.00" font-size="7.1" fill="#ffffff" font-weight="bold" text-anchor="middle" >-1.2%</text>
<text x="714.50" y="728.00" font-size="7.1" fill="#ffffff" font-weight="bold" text-anchor="middle" >-0.1%</text>
<text x="747.00" y="728.00" font-size="7.1" fill="#ffffff" font-weight="bold" text-anchor="middle" >+0.1%</text>
<text x="780.00" y="728.00" font-size="7.1" fill="#ffffff" font-weight="bold" text-anchor="middle" >+0.2%</text>
<text x="812.50" y="728.00" font-size="7.1" fill="#ffffff" font-weight="bold" text-anchor="middle" >+0.7%</text>
<text x="845.00" y="728.00" font-size="7.1" fill="#ffffff" font-weight="bold" text-anchor="middle" >+0.4%</text>
<text x="648.00" y="744.00" font-size="7.1" fill="#ffffff" font-weight="bold" text-anchor="middle" >684.00</text>
<text x="682.00" y="744.00" font-size="7.1" fill="#ffffff" font-weight="bold" text-anchor="middle" >-0.8%</text>
<text x="714.50" y="744.00" font-size="7.1" fill="#ffffff" font-weight="bold" text-anchor="middle" >-0.2%</text>
<text x="747.00" y="744.00" font-size="7.1" fill="#ffffff" font-weight="bold" text-anchor="middle" >+0.1%</text>
<text x="780.00" y="744.00" font-size="7.1" fill="#ffffff" font-weight="bold" text-anchor="middle" >+0.2%</text>
<text x="812.50" y="744.00" font-size="7.1" fill="#ffffff" font-weight="bold" text-anchor="middle" >+0.8%</text>
<text x="845.00" y="744.00" font-size="7.1" fill="#ffffff" font-weight="bold" text-anchor="middle" >+0.4%</text>
<text x="648.00" y="760.00" font-size="7.1" fill="#ffffff" font-weight="bold" text-anchor="middle" >683.00</text>
<text x="682.00" y="760.00" font-size="7.1" fill="#ffffff" font-weight="bold" text-anchor="middle" >-1.5%</text>
<text x="714.50" y="760.00" font-size="7.1" fill="#ffffff" font-weight="bold" text-anchor="middle" >-0.1%</text>
<text x="747.00" y="760.00" font-size="7.1" fill="#ffffff" font-weight="bold" text-anchor="middle" >+0.2%</text>
<text x="780.00" y="760.00" font-size="7.1" fill="#ffffff" font-weight="bold" text-anchor="middle" >+0.2%</text>
<text x="812.50" y="760.00" font-size="7.1" fill="#ffffff" font-weight="bold" text-anchor="middle" >+0.8%</text>
<text x="845.00" y="760.00" font-size="7.1" fill="#ffffff" font-weight="bold" text-anchor="middle" >+0.3%</text>
<text x="648.00" y="776.00" font-size="7.1" fill="#ffffff" font-weight="bold" text-anchor="middle" >682.00</text>
<text x="682.00" y="776.00" font-size="7.1" fill="#ffffff" font-weight="bold" text-anchor="middle" >-0.8%</text>
<text x="714.50" y="776.00" font-size="7.1" fill="#ffffff" font-weight="bold" text-anchor="middle" >-0.5%</text>
<text x="747.00" y="776.00" font-size="7.1" fill="#ffffff" font-weight="bold" text-anchor="middle" >+0.0%</text>
<text x="780.00" y="776.00" font-size="7.1" fill="#ffffff" font-weight="bold" text-anchor="middle" >+0.3%</text>
<text x="812.50" y="776.00" font-size="7.1" fill="#ffffff" font-weight="bold" text-anchor="middle" >+0.8%</text>
<text x="845.00" y="776.00" font-size="7.1" fill="#ffffff" font-weight="bold" text-anchor="middle" >+0.4%</text>
<rect x="917" y="0" width="1" height="936" fill="#111111"/>
<rect x="918" y="0" width="2" height="936" fill="#fbfbfb"/>
</svg></body></html>
